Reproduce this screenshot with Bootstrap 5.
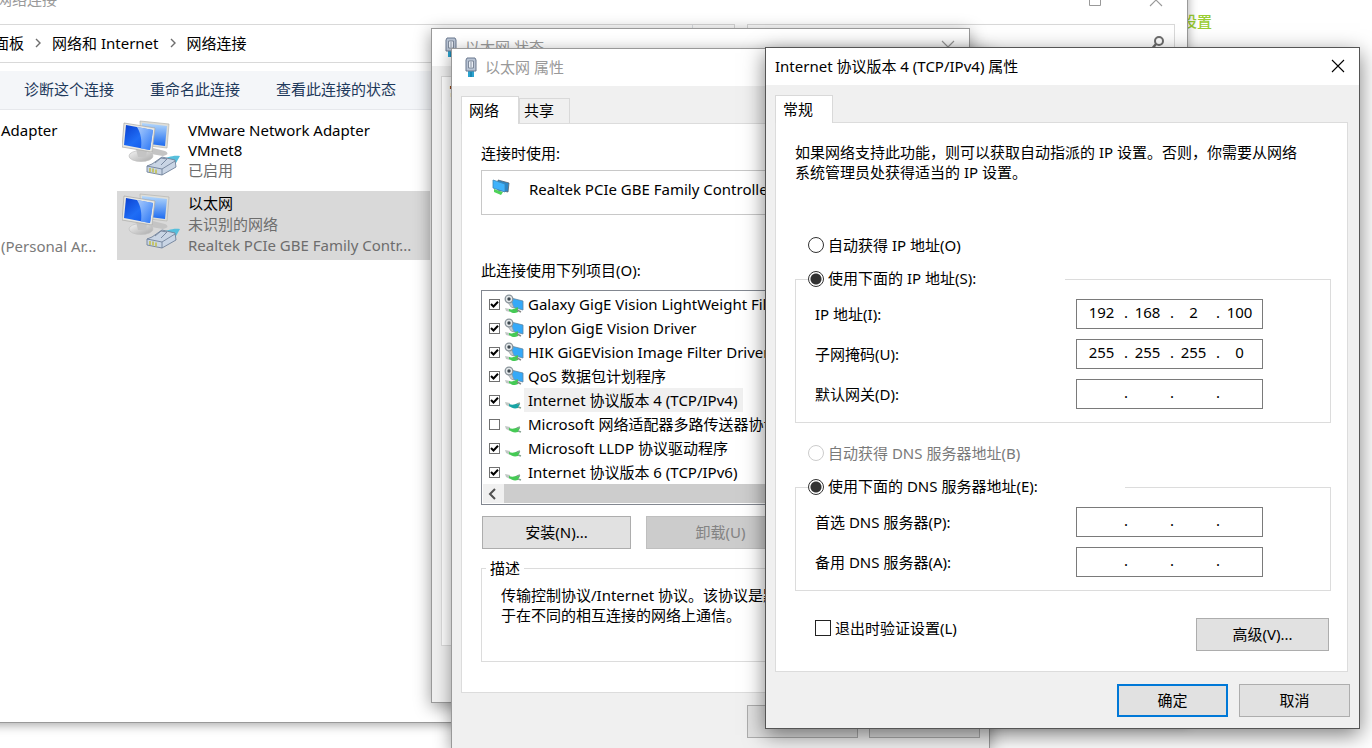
<!DOCTYPE html>
<html lang="zh-CN">
<head>
<meta charset="utf-8">
<meta name="viewport" content="width=device-width, initial-scale=1">
<title>网络连接</title>
<link href="https://cdn.jsdelivr.net/npm/bootstrap@5.3.0/dist/css/bootstrap.min.css" rel="stylesheet">
<style>
  body { font: 15px/20px "Noto Sans", "Noto Sans CJK SC", sans-serif; color: #000; background: #fff; }
  .desktop { position: relative; min-height: 100vh; overflow: hidden; }
  .page-link-green { color: #9acd32; font-weight: 500; padding: 11px 160px 0 0; }
  .win { position: absolute; border: 1px solid #999; background: #f0f0f0; box-shadow: 0 4px 16px rgba(0,0,0,.4); }
  .win-explorer { left: -60px; right: 184px; top: -16px; min-height: 739px; background: #fff; box-shadow: 0 2px 10px rgba(0,0,0,.35); }
  .win-status { left: 431px; top: 28px; width: 539px; }
  .win-props { left: 451px; top: 48px; width: 539px; }
  .win-ipv4 { left: 765px; top: 47px; width: 595px; border-color: #555; box-shadow: 0 6px 20px rgba(0,0,0,.5); }
  .titlebar { height: 37px; background: #fff; padding-bottom: 1px; }
  .inactive { color: #999; }
  .btn-close-win { border: 0; background: none; padding: 0; line-height: 0; color: inherit; }
  svg { display: block; flex: none; }

  .address { border: 1px solid #d9d9d9; height: 39px; padding-bottom: 2px; }
  .commands { background: #f4f6f9; border-bottom: 1px solid #e6e8ec; height: 39px; padding-bottom: 2px; }
  .commands a { color: #1e395b; text-decoration: none; }
  .adapter { height: 69px; width: 313px; padding: 2px 10px 0 5px; gap: 6px; }
  .adapter.picked { background: #d9d9d9; line-height: 21px; }
  .status-line { display: block; color: #6d6d6d; line-height: 21px; }

  .tab { border: 1px solid #d9d9d9; border-bottom: 0; background: #f0f0f0; padding: 0 4px 2px; text-align: left; color: #000; height: 25px; width: 51px; }
  .tab.active { background: #fff; width: 58px; height: 28px; margin-bottom: -1px; position: relative; padding-left: 7px; }
  .panel { border: 1px solid #dcdcdc; background: #fff; }
  .cmd { border: 1px solid #adadad; background: #e1e1e1; color: #000; height: 33px; padding: 0 0 2px; }
  .cmd:disabled { background: #ccc; color: #838383; border-color: #bfbfbf; }
  .cmd.default { border: 2px solid #0078d7; }

  .box-line { border: 1px solid #c8c8c8; height: 45px; padding: 8px 10px; gap: 19px; }
  .items { border: 1px solid #828790; height: 215px; padding: 1px; overflow: hidden; }
  .item-row { padding-left: 2px; }
  .items label { height: 24px; display: block; white-space: nowrap; padding: 2px 6px 2px 4px; }
  .items .focus { background: #f0f0f0; }
  .tick { appearance: none; flex: none; margin: 0; border: 1px solid #707070; background: #fff; width: 11px; height: 11px; }
  .tick:checked { background: #fff url("data:image/svg+xml,%3Csvg xmlns='http://www.w3.org/2000/svg' viewBox='0 0 9 9'%3E%3Cpath d='M1 4l2.5 2.5L8 1.8' fill='none' stroke='%23000' stroke-width='2'/%3E%3C/svg%3E") center/9px no-repeat; }
  .tick.large { width: 16px; height: 16px; border-color: #222; }
  .hscroll { height: 19px; background: #f0f0f0; }
  .thumb { background: #cdcdcd; }

  .group { border: 1px solid #dcdcdc; min-width: 0; }
  .group > legend { float: none; font-size: 15px; line-height: 20px; height: 20px; margin: 0; padding: 0; background: #fff; }
  .group > legend label { padding-bottom: 3px; }
  .choice { appearance: none; flex: none; width: 16px; height: 16px; margin: 0; border: 1px solid #333; border-radius: 50%; background: #fff; }
  .choice:checked { background: radial-gradient(circle, #333 0 5px, #fff 6px); }
  .choice:disabled { border-color: #ccc; }
  .muted { color: #7a7a7a; }
  .field-name { width: 261px; }
  .ip { border: 1px solid #7a7a7a; width: 187px; height: 30px; background: #fff; padding: 0 1px 4px 6px; }
  .ip input { border: 0; padding: 0 3px 0 0; width: 40px; height: 20px; text-align: center; background: none; color: #000; }
  .ip span { width: 6px; text-align: center; }
</style>
</head>
<body>
<svg width="0" height="0" class="position-absolute" aria-hidden="true">
  <defs>
    <linearGradient id="scr" x1="0" y1="0" x2="1" y2="1"><stop offset="0" stop-color="#0a3fd0"/><stop offset=".5" stop-color="#1f6df5"/><stop offset="1" stop-color="#0b50e8"/></linearGradient>
    <linearGradient id="scr2" x1="0" y1="0" x2="0" y2="1"><stop offset="0" stop-color="#b5d8fb"/><stop offset="1" stop-color="#1d6bf0"/></linearGradient>
    <linearGradient id="gls" x1="0" y1="0" x2="1" y2="1"><stop offset="0" stop-color="#cfe5ff"/><stop offset="1" stop-color="#2f7df8"/></linearGradient>
    <linearGradient id="std" x1="0" y1="0" x2="1" y2="1"><stop offset="0" stop-color="#f4f4f4"/><stop offset="1" stop-color="#a9a9a9"/></linearGradient>
    <symbol id="adapter" viewBox="0 0 60 58">
      <path d="M31 28l12 3c4 2 3 4-2 5l-12-2z" fill="#c4c4c4"/>
      <path d="M18 1l29 3-2 24-26-3z" fill="#deded9" stroke="#b4b4b0" stroke-width=".7"/>
      <path d="M20 3l25 3-2 20-23-3z" fill="url(#scr2)"/>
      <ellipse cx="19" cy="36" rx="12" ry="5.500" fill="url(#std)" stroke="#c0c0c0" stroke-width=".7"/>
      <path d="M14 29l11 2-1 6h-8z" fill="#c4c4c4"/>
      <path d="M2 3l31 5-3 24L0 27z" fill="#e8e8e4" stroke="#a8a8a5" stroke-width=".7"/>
      <path d="M4 5l27 5-3 20-26-5z" fill="url(#scr)"/>
      <path d="M15 7l16 3-3 20-9-1.500c1-8 0-15-4-21.500z" fill="url(#gls)" opacity=".8"/>
      <path d="M40 39c6-1 9-4 18-3l-4 7-10 3z" fill="#56bfdc"/>
      <path d="M25 46l5-2 10-7 13 3 1 7-14 8-15-3z" fill="#c9d5e5" stroke="#71819a" stroke-width=".9"/>
      <path d="M25 46l15 3 13-8M40 49v6M33 43l6-5 6 1-6 6" fill="none" stroke="#71819a" stroke-width=".9"/>
      <path d="M28 48v4m3-3.500v4m3-3v4" stroke="#c2bf45" stroke-width="1.500"/>
    </symbol>
    <symbol id="plug" viewBox="0 0 12 20">
      <path d="M3 14h6v6H3z" fill="#2ba3cf"/><path d="M5.500 15h1v5h-1z" fill="#0d6f98"/>
      <path d="M2 1h8l1 2v11H1V3z" fill="#b9c4d4" stroke="#68768d"/><path d="M3.500 4h5v7h-5z" fill="#e8edf4" stroke="#7d8899"/>
      <path d="M6 5v5" stroke="#8994a5"/>
    </symbol>
    <symbol id="screens" viewBox="0 0 18 16">
      <path d="M2 10l9 3-2 3-7-3z" fill="#4fd25a"/><path d="M6 1l11 3-1 9-10-2z" fill="#2a87c8" stroke="#59646e" stroke-width=".8"/>
      <path d="M1 1l12 4v8L1 9z" fill="#3fb2fb" stroke="#3d86b5" stroke-width=".8"/>
    </symbol>
    <symbol id="service" viewBox="0 0 20 20">
      <path d="M7 4l12 3v9L8 13z" fill="#35a9f8" stroke="#5d86a3" stroke-width=".8"/>
      <path d="M1 14l5 1v3l-4-1z" fill="#c0c8c4"/><path d="M5 15c3 1 5 0 9-2v5c-4 2-6 1-9-1z" fill="#45ca55"/><path d="M13 16l4 2" stroke="#888" stroke-width="1.500"/>
      <path d="M3 7l4-1 3 8-3-1z" fill="#c5cbd0" stroke="#8d959b" stroke-width=".6"/>
      <circle cx="5" cy="5" r="3.800" fill="#e4e8ea" stroke="#8a949b" stroke-width="1.300"/><circle cx="5" cy="5" r="1.700" fill="#3f4950"/>
    </symbol>
    <symbol id="proto" viewBox="0 0 20 20">
      <path d="M1 12l5 1v4l-4-2z" fill="#c0c8c4"/><path d="M5 14c3 1 5 1 9-1l2 1-2 4c-4 1-6 0-9-2z" fill="currentColor"/><path d="M13 14l3-1m-2 4l3 1" stroke="#87a393" stroke-width="1.500"/>
    </symbol>
    <symbol id="cross" viewBox="0 0 14 14"><path d="M1 1l12 12M13 1L1 13" stroke="currentColor" stroke-width="1.100"/></symbol>
    <symbol id="chev" viewBox="0 0 6 10"><path d="M1 1l4 4-4 4" fill="none" stroke="#6d6d6d" stroke-width="1.400"/></symbol>
  </defs>
</svg>

<main class="desktop">
  <div class="d-flex justify-content-end"><a href="#" class="page-link-green text-decoration-none">设置</a></div>

  <section class="win win-explorer" aria-label="网络连接">
    <header class="d-flex justify-content-between inactive ps-5" style="height:39px">
      <span class="ms-2 pt-1">网络连接</span>
      <span class="d-flex gap-5 pe-4">
        <button class="btn-close-win align-self-start mt-2" aria-label="最大化"><svg width="13" height="14"><path d="M1.500.500h11v12h-11z" fill="none" stroke="currentColor"/></svg></button>
        <button class="btn-close-win align-self-start mt-2" aria-label="关闭"><svg width="14" height="14"><use href="#cross"/></svg></button>
      </span>
    </header>
    <div class="d-flex pe-2 me-1" style="gap:12px">
      <nav class="address d-flex align-items-center flex-grow-1" style="padding-left:52px;gap:11px" aria-label="路径">
        <span>面板</span><svg width="6" height="10"><use href="#chev"/></svg><span>网络和 Internet</span><svg width="6" height="10"><use href="#chev"/></svg><span>网络连接</span>
        <span class="ms-auto h-100 border-start" style="width:42px"></span>
      </nav>
      <div class="address d-flex justify-content-end pe-2 pt-2" style="width:428px">
        <svg width="18" height="20" viewBox="0 0 18 20"><circle cx="11" cy="8" r="4" fill="none" stroke="#6d6d6d" stroke-width="2"/><path d="M8 11l-5 6" stroke="#6d6d6d" stroke-width="2.500"/></svg>
      </div>
    </div>
    <nav class="commands d-flex align-items-center mt-2" style="padding-left:83px;gap:36px">
      <a href="#">诊断这个连接</a><a href="#">重命名此连接</a><a href="#">查看此连接的状态</a>
    </nav>
    <div class="d-flex" style="padding:8px 0 0 60px">
      <div class="d-flex flex-column justify-content-between" style="width:116px;height:138px;padding-top:2px">
        <span>Adapter</span><span class="muted">(Personal Ar...</span>
      </div>
      <div>
        <div class="adapter d-flex mb-1"><svg width="60" height="58"><use href="#adapter"/></svg>
          <div>VMware Network Adapter<br>VMnet8<span class="status-line">已启用</span></div></div>
        <div class="adapter picked d-flex"><svg width="60" height="58"><use href="#adapter"/></svg>
          <div class="text-nowrap">以太网<span class="status-line">未识别的网络</span><span class="status-line">Realtek PCIe GBE Family Contr...</span></div></div>
      </div>
    </div>
  </section>

  <section class="win win-status" aria-label="以太网 状态">
    <header class="titlebar d-flex align-items-center inactive" style="padding-left:13px;padding-right:14px">
      <svg width="12" height="20" class="me-2"><use href="#plug"/></svg><span>以太网 状态</span>
      <button class="btn-close-win ms-auto" aria-label="关闭"><svg width="14" height="14"><use href="#cross"/></svg></button>
    </header>
    <div style="padding:10px 9px 56px">
      <div class="d-flex align-items-end"><button class="tab active">常规</button></div>
      <div class="panel" style="height:543px"></div>
    </div>
  </section>

  <section class="win win-props" aria-label="以太网 属性">
    <header class="titlebar d-flex align-items-center inactive" style="padding-left:13px">
      <svg width="12" height="20" class="me-2"><use href="#plug"/></svg><span>以太网 属性</span>
    </header>
    <div style="padding:10px 9px">
      <div class="d-flex align-items-end"><button class="tab active">网络</button><button class="tab">共享</button></div>
      <div class="panel" style="padding:19px 19px 30px">
        <div>连接时使用:</div>
        <div class="box-line d-flex" style="margin:7px 0 45px"><svg width="18" height="16"><use href="#screens"/></svg><span>Realtek PCIe GBE Family Controller</span></div>
        <div>此连接使用下列项目(O):</div>
        <div class="items" style="margin-top:10px" role="group" aria-label="此连接使用下列项目">
          <div class="d-flex align-items-center item-row"><input class="tick ms-1" type="checkbox" id="i1" checked><svg width="20" height="20" class="ms-1"><use href="#service"/></svg><label for="i1">Galaxy GigE Vision LightWeight Filter</label></div>
          <div class="d-flex align-items-center item-row"><input class="tick ms-1" type="checkbox" id="i2" checked><svg width="20" height="20" class="ms-1"><use href="#service"/></svg><label for="i2">pylon GigE Vision Driver</label></div>
          <div class="d-flex align-items-center item-row"><input class="tick ms-1" type="checkbox" id="i3" checked><svg width="20" height="20" class="ms-1"><use href="#service"/></svg><label for="i3">HIK GiGEVision Image Filter Driver</label></div>
          <div class="d-flex align-items-center item-row"><input class="tick ms-1" type="checkbox" id="i4" checked><svg width="20" height="20" class="ms-1"><use href="#service"/></svg><label for="i4">QoS 数据包计划程序</label></div>
          <div class="d-flex align-items-center item-row"><input class="tick ms-1" type="checkbox" id="i5" checked><svg width="20" height="20" class="ms-1" color="#18a5a5"><use href="#proto"/></svg><label for="i5" class="focus">Internet 协议版本 4 (TCP/IPv4)</label></div>
          <div class="d-flex align-items-center item-row"><input class="tick ms-1" type="checkbox" id="i6"><svg width="20" height="20" class="ms-1" color="#45ca55"><use href="#proto"/></svg><label for="i6">Microsoft 网络适配器多路传送器协议</label></div>
          <div class="d-flex align-items-center item-row"><input class="tick ms-1" type="checkbox" id="i7" checked><svg width="20" height="20" class="ms-1" color="#45ca55"><use href="#proto"/></svg><label for="i7">Microsoft LLDP 协议驱动程序</label></div>
          <div class="d-flex align-items-center item-row"><input class="tick ms-1" type="checkbox" id="i8" checked><svg width="20" height="20" class="ms-1" color="#45ca55"><use href="#proto"/></svg><label for="i8">Internet 协议版本 6 (TCP/IPv6)</label></div>
          <div class="hscroll d-flex align-items-center"><svg width="21" height="12" viewBox="0 0 21 12"><path d="M12 1L7 6l5 5" fill="none" stroke="#505050" stroke-width="2"/></svg><div class="thumb h-100 flex-grow-1"></div></div>
        </div>
        <div class="d-flex" style="gap:15px;margin:11px 0 9px 1px"><button class="cmd" style="width:149px">安装(N)...</button><button class="cmd" style="width:149px" disabled>卸载(U)</button></div>
        <fieldset class="group" style="height:104px">
          <legend class="w-auto ms-1 px-1">描述</legend>
          <div style="padding:7px 19px">传输控制协议/Internet 协议。该协议是默认的广域网络协议，用于在不同的相互连接的网络上通信。</div>
        </fieldset>
      </div>
      <div class="d-flex justify-content-end" style="gap:11px;margin-top:12px"><button class="cmd" style="width:111px" aria-label="确定"></button><button class="cmd" style="width:111px" aria-label="取消"></button></div>
    </div>
  </section>

  <section class="win win-ipv4" role="dialog" aria-label="Internet 协议版本 4 (TCP/IPv4) 属性">
    <header class="titlebar d-flex align-items-center justify-content-between" style="padding-left:9px;padding-right:14px">
      <span>Internet 协议版本 4 (TCP/IPv4) 属性</span>
      <button class="btn-close-win" aria-label="关闭"><svg width="14" height="14"><use href="#cross"/></svg></button>
    </header>
    <form style="padding:10px 11px 11px 9px">
      <div class="d-flex align-items-end"><button type="button" class="tab active">常规</button></div>
      <div class="panel" style="padding:19px 16px 20px 19px">
        <p style="margin:0 30px 53px 0">如果网络支持此功能，则可以获取自动指派的 IP 设置。否则，你需要从网络系统管理员处获得适当的 IP 设置。</p>
        <div class="d-flex align-items-center gap-1" style="margin:0 0 14px 13px"><input class="choice" type="radio" name="ip" id="ipa"><label for="ipa">自动获得 IP 地址(O)</label></div>
        <fieldset class="group">
          <legend class="d-flex align-items-center gap-1" style="margin-left:12px;width:257px"><input class="choice" type="radio" name="ip" id="ips" checked><label for="ips">使用下面的 IP 地址(S):</label></legend>
          <div class="d-grid" style="gap:10px;padding:10px 19px 13px">
            <div class="d-flex align-items-center"><label class="field-name" for="a1">IP 地址(I):</label><div class="ip d-flex align-items-center"><input id="a1" value="192"><span>.</span><input value="168" aria-label="2"><span>.</span><input value="2" aria-label="3"><span>.</span><input value="100" aria-label="4"></div></div>
            <div class="d-flex align-items-center"><label class="field-name" for="b1">子网掩码(U):</label><div class="ip d-flex align-items-center"><input id="b1" value="255"><span>.</span><input value="255" aria-label="2"><span>.</span><input value="255" aria-label="3"><span>.</span><input value="0" aria-label="4"></div></div>
            <div class="d-flex align-items-center"><label class="field-name" for="c1">默认网关(D):</label><div class="ip d-flex align-items-center"><input id="c1"><span>.</span><input aria-label="2"><span>.</span><input aria-label="3"><span>.</span><input aria-label="4"></div></div>
          </div>
        </fieldset>
        <div class="d-flex align-items-center gap-1 muted" style="margin:20px 0 14px 13px"><input class="choice" type="radio" name="dns" id="dnsa" disabled><label for="dnsa">自动获得 DNS 服务器地址(B)</label></div>
        <fieldset class="group">
          <legend class="d-flex align-items-center gap-1" style="margin-left:12px;width:317px"><input class="choice" type="radio" name="dns" id="dnss" checked><label for="dnss">使用下面的 DNS 服务器地址(E):</label></legend>
          <div class="d-grid" style="gap:10px;padding:10px 19px 13px">
            <div class="d-flex align-items-center"><label class="field-name" for="d1">首选 DNS 服务器(P):</label><div class="ip d-flex align-items-center"><input id="d1"><span>.</span><input aria-label="2"><span>.</span><input aria-label="3"><span>.</span><input aria-label="4"></div></div>
            <div class="d-flex align-items-center"><label class="field-name" for="e1">备用 DNS 服务器(A):</label><div class="ip d-flex align-items-center"><input id="e1"><span>.</span><input aria-label="2"><span>.</span><input aria-label="3"><span>.</span><input aria-label="4"></div></div>
          </div>
        </fieldset>
        <div class="d-flex justify-content-between align-items-start" style="margin:27px 2px 0 20px">
          <div class="d-flex align-items-center gap-1"><input class="tick large" type="checkbox" id="chk"><label for="chk">退出时验证设置(L)</label></div>
          <button type="button" class="cmd" style="width:133px">高级(V)...</button>
        </div>
      </div>
      <div class="d-flex justify-content-end" style="gap:11px;margin:12px -2px 0 0"><button type="button" class="cmd default" style="width:111px">确定</button><button type="button" class="cmd" style="width:111px">取消</button></div>
    </form>
  </section>
</main>
<script src="https://cdn.jsdelivr.net/npm/bootstrap@5.3.0/dist/js/bootstrap.bundle.min.js"></script>
</body>
</html>
